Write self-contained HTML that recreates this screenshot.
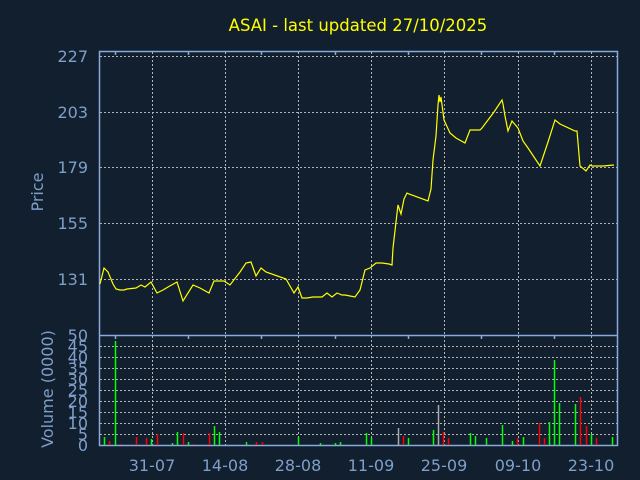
<!DOCTYPE html>
<html><head><meta charset="utf-8"><style>
html,body{margin:0;padding:0;background:#111f2f;}
svg{display:block}
text{font-family:"DejaVu Sans","Liberation Sans",sans-serif;}
</style></head><body>
<svg width="640" height="480" viewBox="0 0 640 480" xmlns="http://www.w3.org/2000/svg">
<rect width="640" height="480" fill="#111f2f"/>
<text x="358" y="31" fill="#ffff00" font-size="16.5" text-anchor="middle">ASAI - last updated 27/10/2025</text>
<g stroke="#b4b4b4" stroke-width="1" stroke-dasharray="2,2" fill="none">
<path d="M100 56.5H617M100 112.5H617M100 167.5H617M100 223.5H617M100 279.5H617"/>
<path d="M152.5 52V445M225.5 52V445M298.5 52V445M371.5 52V445M444.5 52V445M518.5 52V445M591.5 52V445"/>
<path d="M100 346.5H617M100 357.5H617M100 368.5H617M100 379.5H617M100 390.5H617M100 401.5H617M100 412.5H617M100 423.5H617M100 434.5H617"/>
</g>
<g stroke="#88aadd" stroke-width="1.5" fill="none">
<path d="M99.5 51.5H617.5V445.5H99.5Z"/>
<path d="M99.5 335.5H617.5"/>
<path d="M115.5 51V55M188.5 51V55M261.5 51V55M335.5 51V55M408.5 51V55M481.5 51V55M554.5 51V55"/>
<path d="M115.5 335V339M188.5 335V339M261.5 335V339M335.5 335V339M408.5 335V339M481.5 335V339M554.5 335V339"/>
</g>
<g fill="#7f9fc8" font-size="16" text-anchor="end">
<text x="88" y="62">227</text><text x="88" y="118">203</text><text x="88" y="173">179</text><text x="88" y="229">155</text><text x="88" y="285">131</text>
<text x="88" y="341">50</text><text x="88" y="352">45</text><text x="88" y="363">40</text><text x="88" y="374">35</text><text x="88" y="385">30</text><text x="88" y="396">25</text><text x="88" y="407">20</text><text x="88" y="418">15</text><text x="88" y="429">10</text><text x="88" y="440">5</text><text x="88" y="451">0</text>
</g>
<g fill="#7f9fc8" font-size="16" text-anchor="middle">
<text x="152" y="471">31-07</text><text x="225" y="471">14-08</text><text x="298" y="471">28-08</text><text x="371" y="471">11-09</text><text x="444" y="471">25-09</text><text x="518" y="471">09-10</text><text x="591" y="471">23-10</text>
<text transform="translate(43,192) rotate(-90)">Price</text>
<text transform="translate(53,389) rotate(-90)">Volume (0000)</text>
</g>
<polyline fill="none" stroke="#ffff00" stroke-width="1.2" points="100,284 104,268 108,272 113,284 116,289 120,290 124,290 127,289 136,288 141,285 145,287 151,282 157,293 163,290 168,287 177,282 183,301 193,285 200,288 209,293 214,281 224,281 230,285 240,272 246,263 251,262 256,276 261,268 266,272 286,279 294,293 298,287 302,298 307,298 313,297 322,297 327,293 332,297 337,293 342,295 345,295 355,297 360,290 365,270 370,268 376,263 382,263 389,264 392,265 393,248 396,222 398,205 401,214 404,199 407,193 409,194 428,201 431,189 433,160 436,136 438,105 439,95 440,102 441,97 444,120 450,133 456,138 465,143 470,130 480,130 482,128 488,120 494,112 502,100 503,104 505,116 508,131 512,121 518,128 523,141 528,148 540,166 548,142 555,120 560,124 575,131 577,131 580,166 586,171 590,165 592,166 603,166 614,165"/>
<g stroke-width="1.5">
<path stroke="#00ff00" d="M104.5 445V437M115.5 445V341M151.5 445V439M172.5 445V443M177.5 445V432M188.5 445V442M214.5 445V426M219.5 445V432M246.5 445V442M298.5 445V437M320.5 445V443M335.5 445V443M340.5 445V442M366.5 445V433M371.5 445V438M408.5 445V438M433.5 445V430M470.5 445V433M475.5 445V436M486.5 445V438M502.5 445V425M512.5 445V441M523.5 445V437M549.5 445V422M554.5 445V360M559.5 445V403M575.5 445V404M591.5 445V434M612.5 445V437"/>
<path stroke="#ff0000" d="M109.5 445V441M120.5 445V444M136.5 445V437M146.5 445V438M157.5 445V434M183.5 445V433M193.5 445V444M209.5 445V433M256.5 445V442M262.5 445V442M403.5 445V436M443.5 445V432M448.5 445V438M517.5 445V438M539.5 445V423M544.5 445V438M580.5 445V397M586.5 445V426M596.5 445V438"/>
<path stroke="#aaaaaa" d="M398.5 445V428M438.5 445V405"/>
</g>
</svg>
</body></html>
